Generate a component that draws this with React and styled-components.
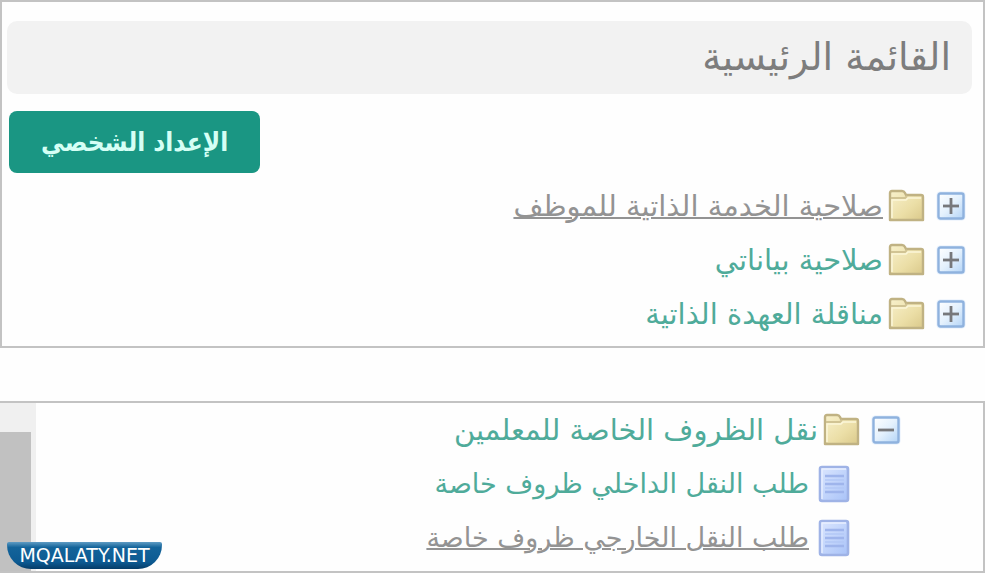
import { useState } from "react";
import styled, { createGlobalStyle } from "styled-components";

const services = [
  { label: "صلاحية الخدمة الذاتية للموظف", active: true },
  { label: "صلاحية بياناتي" },
  { label: "مناقلة العهدة الذاتية" },
];

const requests = [
  { label: "طلب النقل الداخلي ظروف خاصة" },
  { label: "طلب النقل الخارجي ظروف خاصة", active: true },
];

const ToggleIcon = ({ open }) => (
  <svg width="30" height="30" viewBox="0 0 30 30" aria-hidden="true">
    <defs>
      <linearGradient id="toggleFill" x1="0" y1="0" x2="1" y2="1">
        <stop offset="0" stopColor="#ffffff" />
        <stop offset="0.5" stopColor="#e4f1fd" />
        <stop offset="1" stopColor="#b4d4f6" />
      </linearGradient>
    </defs>
    <rect x="0.5" y="0.5" width="29" height="29" rx="4" fill="#e3eefb" />
    <rect
      x="2.5"
      y="2.5"
      width="25"
      height="25"
      rx="2"
      fill="url(#toggleFill)"
      stroke="#8fb2de"
      strokeWidth="2.4"
    />
    <path d="M7 15h16" stroke="#77787b" strokeWidth="2.8" />
    {!open && <path d="M15 7v16" stroke="#77787b" strokeWidth="2.8" />}
  </svg>
);

const FolderIcon = () => (
  <svg width="37" height="34" viewBox="0 0 37 34" aria-hidden="true">
    <defs>
      <linearGradient id="folderFill" x1="0" y1="0" x2="1" y2="1">
        <stop offset="0" stopColor="#f8f1cc" />
        <stop offset="0.6" stopColor="#ebdea6" />
        <stop offset="1" stopColor="#dac98b" />
      </linearGradient>
    </defs>
    <path
      d="M2 31V4Q2 2 4 2H14Q16 2 17 4L18 6H33Q35 6 35 8V31Z"
      fill="url(#folderFill)"
      stroke="#c0b283"
      strokeWidth="2.4"
      strokeLinejoin="round"
    />
    <path d="M3 9H17L19 7" fill="none" stroke="#d1c494" strokeWidth="2" />
    <path d="M4 29V11H18L20 9H33" fill="none" stroke="#fbf6d8" strokeWidth="1.6" />
  </svg>
);

const PageIcon = () => (
  <svg width="32" height="38" viewBox="0 0 32 38" aria-hidden="true">
    <defs>
      <linearGradient id="pageFill" x1="0" y1="0" x2="1" y2="1">
        <stop offset="0" stopColor="#dbe6fe" />
        <stop offset="1" stopColor="#a9c3f8" />
      </linearGradient>
    </defs>
    <rect
      x="2"
      y="2"
      width="28"
      height="34"
      rx="2"
      fill="url(#pageFill)"
      stroke="#9fb3e6"
      strokeWidth="2.6"
    />
    <path d="M4 34V4H28" fill="none" stroke="#e9f0ff" strokeWidth="1.4" />
    <path d="M7 11H26M7 19H26M7 27H26" stroke="#9fb5ec" strokeWidth="2.4" />
    <path d="M7 15H26M7 23H26" stroke="#b3c7f6" strokeWidth="1.6" />
  </svg>
);

const Folder = ({ label, active, defaultOpen = false, children }) => {
  const [open, setOpen] = useState(defaultOpen);

  return (
    <li>
      <Row>
        <Toggle
          type="button"
          aria-label={label}
          aria-expanded={open}
          onClick={() => setOpen(!open)}
        >
          <ToggleIcon open={open} />
        </Toggle>
        <Entry href="#" $active={active}>
          <FolderIcon />
          <span>{label}</span>
        </Entry>
      </Row>
      {open && children}
    </li>
  );
};

const App = () => {
  return (
    <Page dir="rtl" lang="ar">
      <GlobalStyle />
      <Panel>
        <Header>
          <Title>القائمة الرئيسية</Title>
        </Header>
        <Actions>
          <SetupButton type="button">الإعداد الشخصي</SetupButton>
        </Actions>
        <Tree>
          {services.map((item) => (
            <Folder key={item.label} {...item} />
          ))}
        </Tree>
      </Panel>
      <ScrollPanel>
        <NestedTree>
          <Folder label="نقل الظروف الخاصة للمعلمين" defaultOpen>
            <Pages>
              {requests.map((item) => (
                <Row as="li" key={item.label}>
                  <Entry href="#" $active={item.active} $leaf>
                    <PageIcon />
                    <span>{item.label}</span>
                  </Entry>
                </Row>
              ))}
            </Pages>
          </Folder>
        </NestedTree>
        <Track>
          <Thumb />
        </Track>
        <Badge dir="ltr">MQALATY.NET</Badge>
      </ScrollPanel>
    </Page>
  );
};

const GlobalStyle = createGlobalStyle`
  * {
    box-sizing: border-box;
  }

  body {
    background: #fefefe;
    font-family: "DejaVu Sans", sans-serif;
    margin: 0;
  }
`;

const Page = styled.main`
  display: flex;
  flex-direction: column;
  gap: 53px;
`;

const Panel = styled.section`
  border: 2px solid #c3c3c3;
  padding: 19px 0 5px;
`;

const ScrollPanel = styled.section`
  border: 2px solid #c3c3c3;
  border-left: none;
  display: flex;
  justify-content: space-between;
  position: relative;
`;

const Header = styled.header`
  background: #f2f2f2;
  border-radius: 10px;
  margin: 0 11px 0 5px;
  padding: 0 21px;
`;

const Title = styled.h1`
  color: #7d7d7d;
  font-size: 38px;
  font-weight: 400;
  line-height: 73px;
  margin: 0;
`;

const Actions = styled.div`
  display: flex;
  justify-content: flex-end;
  padding: 17px 7px 6px;
`;

const SetupButton = styled.button`
  background: #1a9683;
  border: none;
  border-radius: 8px;
  color: #d5fff5;
  cursor: pointer;
  font-family: "DejaVu Sans Condensed", "DejaVu Sans", sans-serif;
  font-size: 26px;
  font-weight: 700;
  line-height: 62px;
  padding: 0 32px;
`;

const Tree = styled.ul`
  list-style: none;
  margin: 0;
  padding: 0 17px 0 0;
`;

const NestedTree = styled(Tree)`
  padding: 0 82px 6px 0;
`;

const Pages = styled(Tree)`
  padding: 0 51px 0 0;
`;

const Row = styled.div`
  align-items: center;
  display: flex;
  gap: 11px;
  height: 54px;
`;

const Toggle = styled.button`
  background: none;
  border: none;
  cursor: pointer;
  display: flex;
  padding: 0;
`;

const Entry = styled.a`
  align-items: center;
  color: ${({ $active }) => ($active ? "#939393" : "#4fab9a")};
  display: flex;
  font-size: ${({ $leaf }) => ($leaf ? "27px" : "29px")};
  gap: ${({ $leaf }) => ($leaf ? "9px" : "5px")};
  line-height: 54px;
  text-decoration: none;
  white-space: nowrap;

  & > span {
    text-decoration: ${({ $active }) => ($active ? "underline" : "none")};
    text-decoration-thickness: 2px;
  }
`;

const Track = styled.div`
  background: #f0f0f0;
  display: flex;
  padding: 29px 5px 0 0;
  width: 36px;
`;

const Thumb = styled.div`
  background: #c1c1c1;
  flex: 1;
`;

const Badge = styled.div`
  background: linear-gradient(#5f9cc4, #14649a 20%, #0d5a92 75%, #053c68);
  border-radius: 2px 2px 24px 24px;
  bottom: 2px;
  color: #fff;
  font-family: "DejaVu Sans", sans-serif;
  font-size: 19px;
  left: 7px;
  line-height: 27px;
  position: absolute;
  text-align: center;
  width: 155px;
`;

export default App;
